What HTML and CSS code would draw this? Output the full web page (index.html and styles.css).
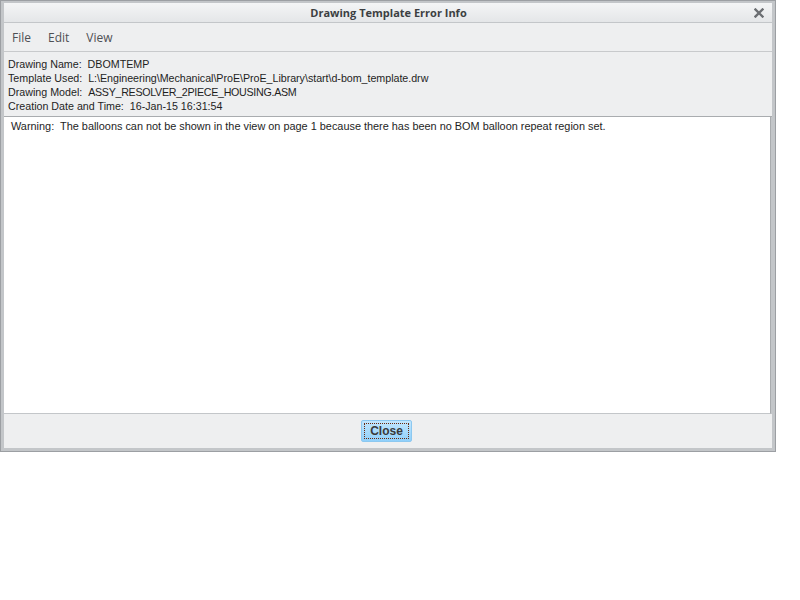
FILE: index.html
```html
<!DOCTYPE html>
<html>
<head>
<meta charset="utf-8">
<link rel="stylesheet" href="styles.css">
</head>
<body>
<div class="window">
  <div class="titlebar">
    <span class="title">Drawing Template Error Info</span>
    <span class="close-x">
      <svg width="10" height="10" viewBox="0 0 10 10"><path d="M1.5 1.5 L8.5 8.5 M8.5 1.5 L1.5 8.5" stroke="#6b6e72" stroke-width="2.4" stroke-linecap="square"/></svg>
    </span>
  </div>
  <div class="menubar">
    <span class="menu">File</span>
    <span class="menu">Edit</span>
    <span class="menu">View</span>
  </div>
  <div class="info">
    <div class="line">Drawing Name:  DBOMTEMP</div>
    <div class="line">Template Used:  <span class="path">L:\Engineering\Mechanical\ProE\ProE_Library\start\d-bom_template.drw</span></div>
    <div class="line">Drawing Model:  <span class="model">ASSY_RESOLVER_2PIECE_HOUSING.ASM</span></div>
    <div class="line">Creation Date and Time:  16-Jan-15 16:31:54</div>
  </div>
  <div class="textarea">
    <div class="line warn">Warning:  The balloons can not be shown in the view on page 1 because there has been no BOM balloon repeat region set.</div>
  </div>
  <div class="bottombar">
    <button class="btn"><span class="focus">Close</span></button>
  </div>
</div>
</body>
</html>
```
FILE: styles.css
```css
html, body {
  margin: 0;
  padding: 0;
  background: #ffffff;
}
.window {
  width: 776px;
  height: 452px;
  box-sizing: border-box;
  border: 1px solid #9c9fa3;
  background: #c3c6c9;
  padding: 2px 3px 3px 3px;
  display: flex;
  flex-direction: column;
}
.titlebar {
  height: 19px;
  flex: none;
  position: relative;
  display: flex;
  align-items: center;
  justify-content: center;
  background: linear-gradient(#f4f5f6, #e4e6e8);
  border-bottom: 1px solid #c3c6c9;
}
.title {
  font-family: "Open Sans", sans-serif;
  font-weight: bold;
  font-size: 11px;
  color: #3c3f42;
  margin-left: 1px;
}
.close-x {
  position: absolute;
  right: 8px;
  top: 5px;
  width: 10px;
  height: 10px;
  display: flex;
}
.menubar {
  height: 28px;
  flex: none;
  background: #eeeff0;
  border-bottom: 1px solid #c8cacc;
  display: flex;
  align-items: center;
  padding-left: 8px;
}
.menu {
  font-family: "Open Sans", sans-serif;
  font-size: 12px;
  color: #4e5054;
  margin-right: 17px;
}
.info {
  flex: none;
  background: #eeeff0;
  padding: 5px 0 3px 4px;
  border-bottom: 1px solid #a9acaf;
}
.line {
  font-family: "Liberation Sans", Arial, sans-serif;
  font-size: 10.7px;
  line-height: 14px;
  color: #1e1e1e;
  white-space: pre;
}
.path {
  letter-spacing: -0.03px;
}
.model {
  letter-spacing: -0.3px;
}
.warn {
  font-size: 10.9px;
}
.textarea {
  flex: 1;
  background: #ffffff;
  border-right: 1px solid #a9acaf;
  border-bottom: 1px solid #c3c6c9;
  padding: 2px 0 0 7px;
  margin-right: 1px;
}
.bottombar {
  height: 34px;
  flex: none;
  background: #eeeff0;
  display: flex;
  align-items: center;
  justify-content: center;
}
.btn {
  margin: 0 3px 0 0;
  width: 51px;
  height: 22px;
  padding: 2px;
  border: 1px solid #8cc8f0;
  border-radius: 2px;
  background: linear-gradient(#c2e6fd, #8fd0fb);
  display: flex;
  align-items: center;
  justify-content: center;
  box-sizing: border-box;
}
.focus {
  flex: 1;
  height: 100%;
  box-sizing: border-box;
  border: 1px dotted #6a2a10;
  font-family: "Liberation Sans", Arial, sans-serif;
  font-size: 12px;
  font-weight: bold;
  color: #3a3a3a;
  display: flex;
  align-items: center;
  justify-content: center;
}
```
